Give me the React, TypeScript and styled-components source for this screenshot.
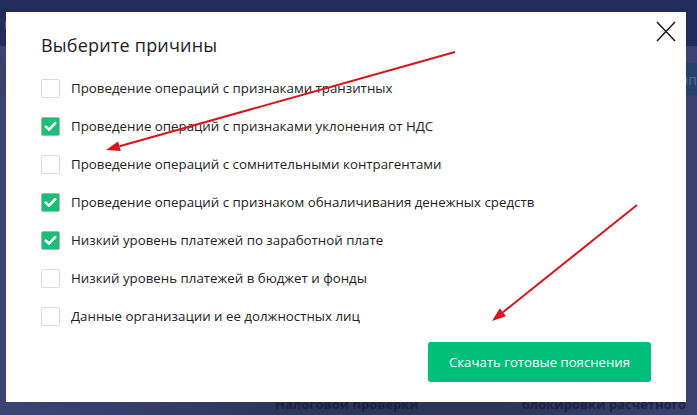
import React from 'react'
import styled, { createGlobalStyle } from 'styled-components'

const GlobalStyle = createGlobalStyle`
  html, body {
    margin: 0;
    padding: 0;
  }
  body {
    font-family: 'Open Sans', 'Liberation Sans', sans-serif;
    background: #373e6c;
  }
`

const Page = styled.div`
  position: relative;
  width: 697px;
  height: 415px;
  overflow: hidden;
  display: flex;
  flex-direction: column;
  background: linear-gradient(90deg, #3b4476 0%, #2f365c 40%, #2d3458 70%, #3a4170 100%);
`

const TopBar = styled.div`
  height: 46px;
  flex: none;
  background: #232b5d;
  display: flex;
  align-items: center;
  padding: 0 4px;
  color: #5b6391;
  font-size: 14px;
`

const SubBar = styled.div`
  height: 17px;
  flex: none;
  background: #3c4374;
`

const BgRow = styled.div`
  height: 32px;
  flex: none;
  display: flex;
  justify-content: flex-end;
  align-items: center;
  background: #3a4171;
`

const BgButton = styled.div`
  height: 32px;
  width: 120px;
  background: #25406b;
  color: #4d6d93;
  font-size: 14px;
  display: flex;
  align-items: center;
  justify-content: flex-end;
`

const BgBody = styled.div`
  flex: 1;
  display: flex;
  align-items: flex-end;
  gap: 103px;
  padding: 0 0 3px 275px;
`

const BgCaption = styled.div`
  color: #1c2242;
  font-size: 13px;
  font-weight: 700;
  line-height: 16px;
  white-space: nowrap;
`

const Modal = styled.div`
  position: absolute;
  left: 6px;
  top: 12px;
  width: 680px;
  height: 390px;
  box-sizing: border-box;
  background: #fff;
  padding: 21px 35px 20px 35px;
  display: flex;
  flex-direction: column;
`

const Title = styled.h2`
  margin: 0 0 12px 0;
  font-size: 18px;
  font-weight: 400;
  letter-spacing: 0.2px;
  line-height: 24px;
  color: #1d1d1d;
`

const CloseButton = styled.button`
  position: absolute;
  top: 9px;
  right: 10px;
  width: 20px;
  height: 21px;
  padding: 0;
  border: none;
  background: none;
  cursor: pointer;
  display: flex;
`

const List = styled.div`
  display: flex;
  flex-direction: column;
`

const Row = styled.label`
  height: 38px;
  display: flex;
  align-items: center;
  gap: 11px;
  font-size: 13.3px;
  color: #222;
  cursor: pointer;
`

const Box = styled.span<{ $checked: boolean }>`
  width: 19px;
  height: 19px;
  flex: none;
  box-sizing: border-box;
  border-radius: 2px;
  border: 1px solid ${p => (p.$checked ? '#a7b8ad' : '#dcdcdc')};
  background: ${p => (p.$checked ? '#19bf78' : '#fff')};
  display: flex;
  align-items: center;
  justify-content: center;
`

const Footer = styled.div`
  margin-top: auto;
  display: flex;
  justify-content: flex-end;
`

const PrimaryButton = styled.button`
  width: 223px;
  height: 40px;
  border: none;
  border-radius: 3px;
  background: #00bf78;
  color: #fff;
  font-family: inherit;
  font-size: 13.2px;
  cursor: pointer;
`

const Annotations = styled.svg`
  position: absolute;
  left: 0;
  top: 0;
  pointer-events: none;
`

const reasons = [
  { text: 'Проведение операций с признаками транзитных', checked: false },
  { text: 'Проведение операций с признаками уклонения от НДС', checked: true },
  { text: 'Проведение операций с сомнительными контрагентами', checked: false },
  { text: 'Проведение операций с признаком обналичивания денежных средств', checked: true },
  { text: 'Низкий уровень платежей по заработной плате', checked: true },
  { text: 'Низкий уровень платежей в бюджет и фонды', checked: false },
  { text: 'Данные организации и ее должностных лиц', checked: false },
]

function Check() {
  return (
    <svg width="13" height="11" viewBox="0 0 13 11">
      <path d="M1.8 5.6 L5 8.6 L11.2 2.2" fill="none" stroke="#fff" strokeWidth="2.6" strokeLinecap="round" strokeLinejoin="round" />
    </svg>
  )
}

function App() {
  return (
    <>
      <GlobalStyle />
      <Page>
        <TopBar>и</TopBar>
        <SubBar />
        <BgRow>
          <BgButton>мп</BgButton>
        </BgRow>
        <BgBody>
          <BgCaption>Налоговой проверки</BgCaption>
          <BgCaption>блокировки расчетного</BgCaption>
        </BgBody>

        <Modal>
          <CloseButton aria-label="Закрыть">
            <svg width="20" height="21" viewBox="0 0 20 21">
              <path d="M1 1 L19 20 M19 1 L1 20" stroke="#1a1a1a" strokeWidth="1.5" fill="none" />
            </svg>
          </CloseButton>
          <Title>Выберите причины</Title>
          <List>
            {reasons.map(r => (
              <Row key={r.text}>
                <Box $checked={r.checked}>{r.checked && <Check />}</Box>
                {r.text}
              </Row>
            ))}
          </List>
          <Footer>
            <PrimaryButton>Скачать готовые пояснения</PrimaryButton>
          </Footer>
        </Modal>

        <Annotations width="697" height="415" viewBox="0 0 697 415">
          <line x1="455" y1="52" x2="119.5" y2="146.2" stroke="#d8151c" strokeWidth="2" />
          <polygon points="106,150 120.8,151 118.1,141.4" fill="#d8151c" />
          <line x1="637" y1="205" x2="502.9" y2="312.3" stroke="#d8151c" strokeWidth="2" />
          <polygon points="492,321 506,316.2 499.8,308.3" fill="#d8151c" />
        </Annotations>
      </Page>
    </>
  )
}

export default App
